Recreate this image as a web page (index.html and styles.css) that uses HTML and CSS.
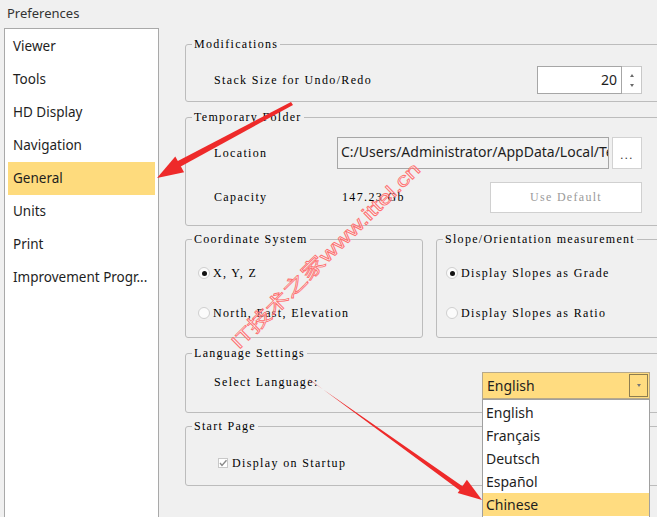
FILE: index.html
```html
<!DOCTYPE html>
<html>
<head>
<meta charset="utf-8">
<title>Preferences</title>
<link rel="stylesheet" href="styles.css">
</head>
<body>
<div class="window">
  <div class="title">Preferences</div>
  <div class="main">
    <ul class="sidebar">
      <li>Viewer</li>
      <li>Tools</li>
      <li>HD Display</li>
      <li>Navigation</li>
      <li class="active">General</li>
      <li>Units</li>
      <li>Print</li>
      <li>Improvement Progr...</li>
    </ul>
    <div class="content">
      <fieldset class="group g-mod">
        <legend>Modifications</legend>
        <div class="gbody">
          <div class="row h28">
            <span class="label w324">Stack Size for Undo/Redo</span>
            <div class="spin">
              <div class="spin-input">20</div>
              <div class="spin-btns"><span class="tri up"></span><span class="tri down"></span></div>
            </div>
          </div>
        </div>
      </fieldset>

      <fieldset class="group g-temp">
        <legend>Temporary Folder</legend>
        <div class="gbody">
          <div class="row h32">
            <span class="label w124">Location</span>
            <div class="path"><span class="path-text">C:/Users/Administrator/AppData/Local/Temp</span></div>
            <div class="browse">...</div>
          </div>
          <div class="row h31 mt13">
            <span class="label w129">Capacity</span>
            <span class="label w148">147.23 Gb</span>
            <div class="btn-default">Use Default</div>
          </div>
        </div>
      </fieldset>

      <div class="pair">
        <fieldset class="group g-coord">
          <legend>Coordinate System</legend>
          <div class="gbody radios">
            <div class="opt"><span class="radio on"></span><span class="label">X, Y, Z</span></div>
            <div class="opt"><span class="radio"></span><span class="label">North, East, Elevation</span></div>
          </div>
        </fieldset>
        <fieldset class="group g-slope">
          <legend>Slope/Orientation measurement</legend>
          <div class="gbody radios">
            <div class="opt"><span class="radio on"></span><span class="label">Display Slopes as Grade</span></div>
            <div class="opt"><span class="radio"></span><span class="label">Display Slopes as Ratio</span></div>
          </div>
        </fieldset>
      </div>

      <fieldset class="group g-lang">
        <legend>Language Settings</legend>
        <div class="gbody">
          <div class="row h27 top">
            <span class="label w269 lh20">Select Language:</span>
            <div class="combo">
              <div class="combo-field">
                <span class="combo-text">English</span>
                <span class="combo-btn"><span class="tri down"></span></span>
              </div>
              <ul class="dropdown">
                <li>English</li>
                <li>Français</li>
                <li>Deutsch</li>
                <li>Español</li>
                <li class="sel">Chinese</li>
              </ul>
            </div>
          </div>
        </div>
      </fieldset>

      <fieldset class="group g-start">
        <legend>Start Page</legend>
        <div class="gbody">
          <div class="opt">
            <span class="check"><svg width="10" height="10" viewBox="0 0 10 10"><path d="M2 5 L4 7.5 L8.5 2.2" fill="none" stroke="#8a8a8a" stroke-width="1.4"/></svg></span>
            <span class="label">Display on Startup</span>
          </div>
        </div>
      </fieldset>
    </div>
  </div>

  <svg class="overlay" width="657" height="517" viewBox="0 0 657 517">
    <text class="wm" x="0" y="0" transform="translate(239 350) rotate(-44.5)" textLength="256" lengthAdjust="spacingAndGlyphs">IT技术之家www.ittel.cn</text>
    <polygon points="291,102 293,105 178,168 174,163" fill="#ee2a2a"/>
    <polygon points="157,178 175.3,156.5 184.1,172.3" fill="#ee2a2a"/>
    <polygon points="309,379 311,381 465,488 462,492" fill="#ee2a2a"/>
    <polygon points="482,500 466.9,479.7 457.7,492.9" fill="#ee2a2a"/>
  </svg>
</div>
</body>
</html>
```

FILE: styles.css
```css
* { box-sizing: border-box; }
html, body { margin: 0; padding: 0; }
body {
  width: 657px;
  height: 517px;
  overflow: hidden;
  background: #f0f0f0;
  font-family: "Noto Sans", "Liberation Sans", sans-serif;
  color: #1e1e1e;
}
.window {
  position: relative;
  width: 657px;
  height: 517px;
  overflow: hidden;
}
.title {
  height: 28px;
  padding-left: 7px;
  font-size: 13px;
  line-height: 27px;
  color: #333;
}
.main {
  display: flex;
  align-items: flex-start;
}
.sidebar {
  list-style: none;
  margin: 0 0 0 4px;
  padding: 1px 3px 0;
  width: 155px;
  height: 520px;
  background: #fff;
  border: 1px solid #a9a9a9;
  border-bottom: none;
  flex: none;
}
.sidebar li {
  height: 33px;
  line-height: 32px;
  padding-left: 5px;
  font-size: 13.5px;
  white-space: nowrap;
  color: #1e1e1e;
}
.sidebar li.active { background: #fedb7d; }

.content {
  margin-left: 26px;
  width: 487px;
  flex: none;
}
.group {
  margin: 0;
  padding: 0;
  border: 1px solid #bcbcbc;
  border-radius: 3px;
  min-width: 0;
}
.group legend {
  margin-left: 6px;
  padding: 0 2px;
  font: 12px/13px "Liberation Serif", "DejaVu Serif", serif;
  letter-spacing: 1.3px;
  color: #000;
}
.label {
  font: 12px/13px "Liberation Serif", "DejaVu Serif", serif;
  letter-spacing: 1.35px;
  color: #000;
  white-space: nowrap;
  flex: none;
}
.row { display: flex; align-items: center; }
.row.top { align-items: flex-start; }
.h27 { height: 27px; }
.h28 { height: 28px; }
.h31 { height: 31px; }
.h32 { height: 32px; }
.mt13 { margin-top: 13px; }
.w123 { width: 123px; }
.w124 { width: 123px; }
.w129 { width: 128px; }
.w148 { width: 148px; }
.w269 { width: 268px; }
.w324 { width: 323px; }
.lh20 { line-height: 20px; }

.g-mod { margin-top: 10px; }
.g-mod .gbody { padding: 15px 0 7px 28px; }

.spin { display: flex; height: 28px; }
.spin-input {
  width: 85px;
  height: 28px;
  background: #fff;
  border: 1px solid #a6a6a6;
  text-align: right;
  padding-right: 4px;
  font-size: 14px;
  line-height: 25px;
}
.spin-btns {
  width: 20px;
  height: 28px;
  background: #fff;
  border: 1px solid #c8c8c8;
  border-left: none;
  display: flex;
  flex-direction: column;
  align-items: center;
  justify-content: space-between;
  padding: 7px 0 6px;
}
.tri { width: 0; height: 0; border-left: 2.5px solid transparent; border-right: 2.5px solid transparent; }
.tri.up { border-bottom: 3px solid #6a6a6a; }
.tri.down { border-top: 3px solid #6a6a6a; }

.g-temp { margin-top: 9px; }
.g-temp .gbody { padding: 13px 0 12px 28px; }
.path {
  width: 272px;
  height: 32px;
  border: 1px solid #a6a6a6;
  background: #f2f2f2;
  padding-left: 3px;
  font-size: 14px;
  line-height: 28px;
  white-space: nowrap;
  overflow: hidden;
  flex: none;
}
.browse {
  width: 30px;
  height: 32px;
  margin-left: 3px;
  background: #fff;
  border: 1px solid #d2d2d2;
  text-align: center;
  font: 12px/34px "Liberation Serif", serif;
  letter-spacing: 1.5px;
  color: #333;
  flex: none;
}
.btn-default {
  width: 152px;
  height: 31px;
  background: #fff;
  border: 1px solid #d0d0d0;
  text-align: center;
  font: 12px/29px "Liberation Serif", serif;
  letter-spacing: 1.3px;
  color: #9a9a9a;
  flex: none;
}

.pair { display: flex; gap: 13px; margin-top: 7px; }
.g-coord { width: 238px; flex: none; }
.g-slope { width: 236px; flex: none; }
.radios { display: flex; flex-direction: column; gap: 20px; padding: 17px 0 14px 12px; }
.g-slope .radios { padding-left: 9px; }
.opt { display: flex; align-items: center; height: 20px; gap: 3px; }
.radio {
  width: 12px;
  height: 12px;
  border-radius: 50%;
  border: 1px solid #cfcfcf;
  background: #fbfbfb;
  display: flex;
  align-items: center;
  justify-content: center;
  flex: none;
}
.radio.on::after {
  content: "";
  width: 5px;
  height: 5px;
  border-radius: 50%;
  background: #111;
}

.g-lang { margin-top: 9px; }
.g-lang .gbody { padding: 12px 0 13px 28px; }
.combo { position: relative; width: 168px; height: 27px; flex: none; }
.combo-field {
  display: flex;
  height: 27px;
  background: #ffdc80;
  border: 1px solid #b7a98a;
}
.combo-text { flex: 1; padding-left: 4px; font-size: 14px; line-height: 25px; }
.combo-btn {
  width: 19px;
  margin: 1px 1px 1px 0;
  border: 1px solid #8d7d50;
  display: flex;
  align-items: center;
  justify-content: center;
}
.combo-btn .tri.down { border-top-color: #777; }
.dropdown {
  position: absolute;
  top: 27px;
  left: 0;
  width: 168px;
  margin: 0;
  padding: 1px 0 0;
  list-style: none;
  background: #fff;
  border: 1px solid #a0a0a0;
  border-bottom: none;
  height: 130px;
}
.dropdown li {
  height: 23px;
  line-height: 23px;
  padding-left: 3px;
  font-size: 14px;
  color: #1e1e1e;
}
.dropdown li.sel { background: #ffdc80; }

.g-start { margin-top: 7px; }
.g-start .gbody { padding: 20px 0 12px 32px; }
.g-start .opt { gap: 4px; }
.check {
  width: 10px;
  height: 10px;
  border: 1px solid #c8c8c8;
  background: #fff;
  display: flex;
  flex: none;
}
.check svg { margin: -1px; }

.overlay {
  position: absolute;
  left: 0;
  top: 0;
  pointer-events: none;
}
.wm {
  font-family: "Liberation Sans", "Noto Sans CJK SC", sans-serif;
  font-size: 19px;
  fill: rgba(255,255,255,0.3);
  stroke: #ff6f6f;
  stroke-width: 0.8;
}
```
